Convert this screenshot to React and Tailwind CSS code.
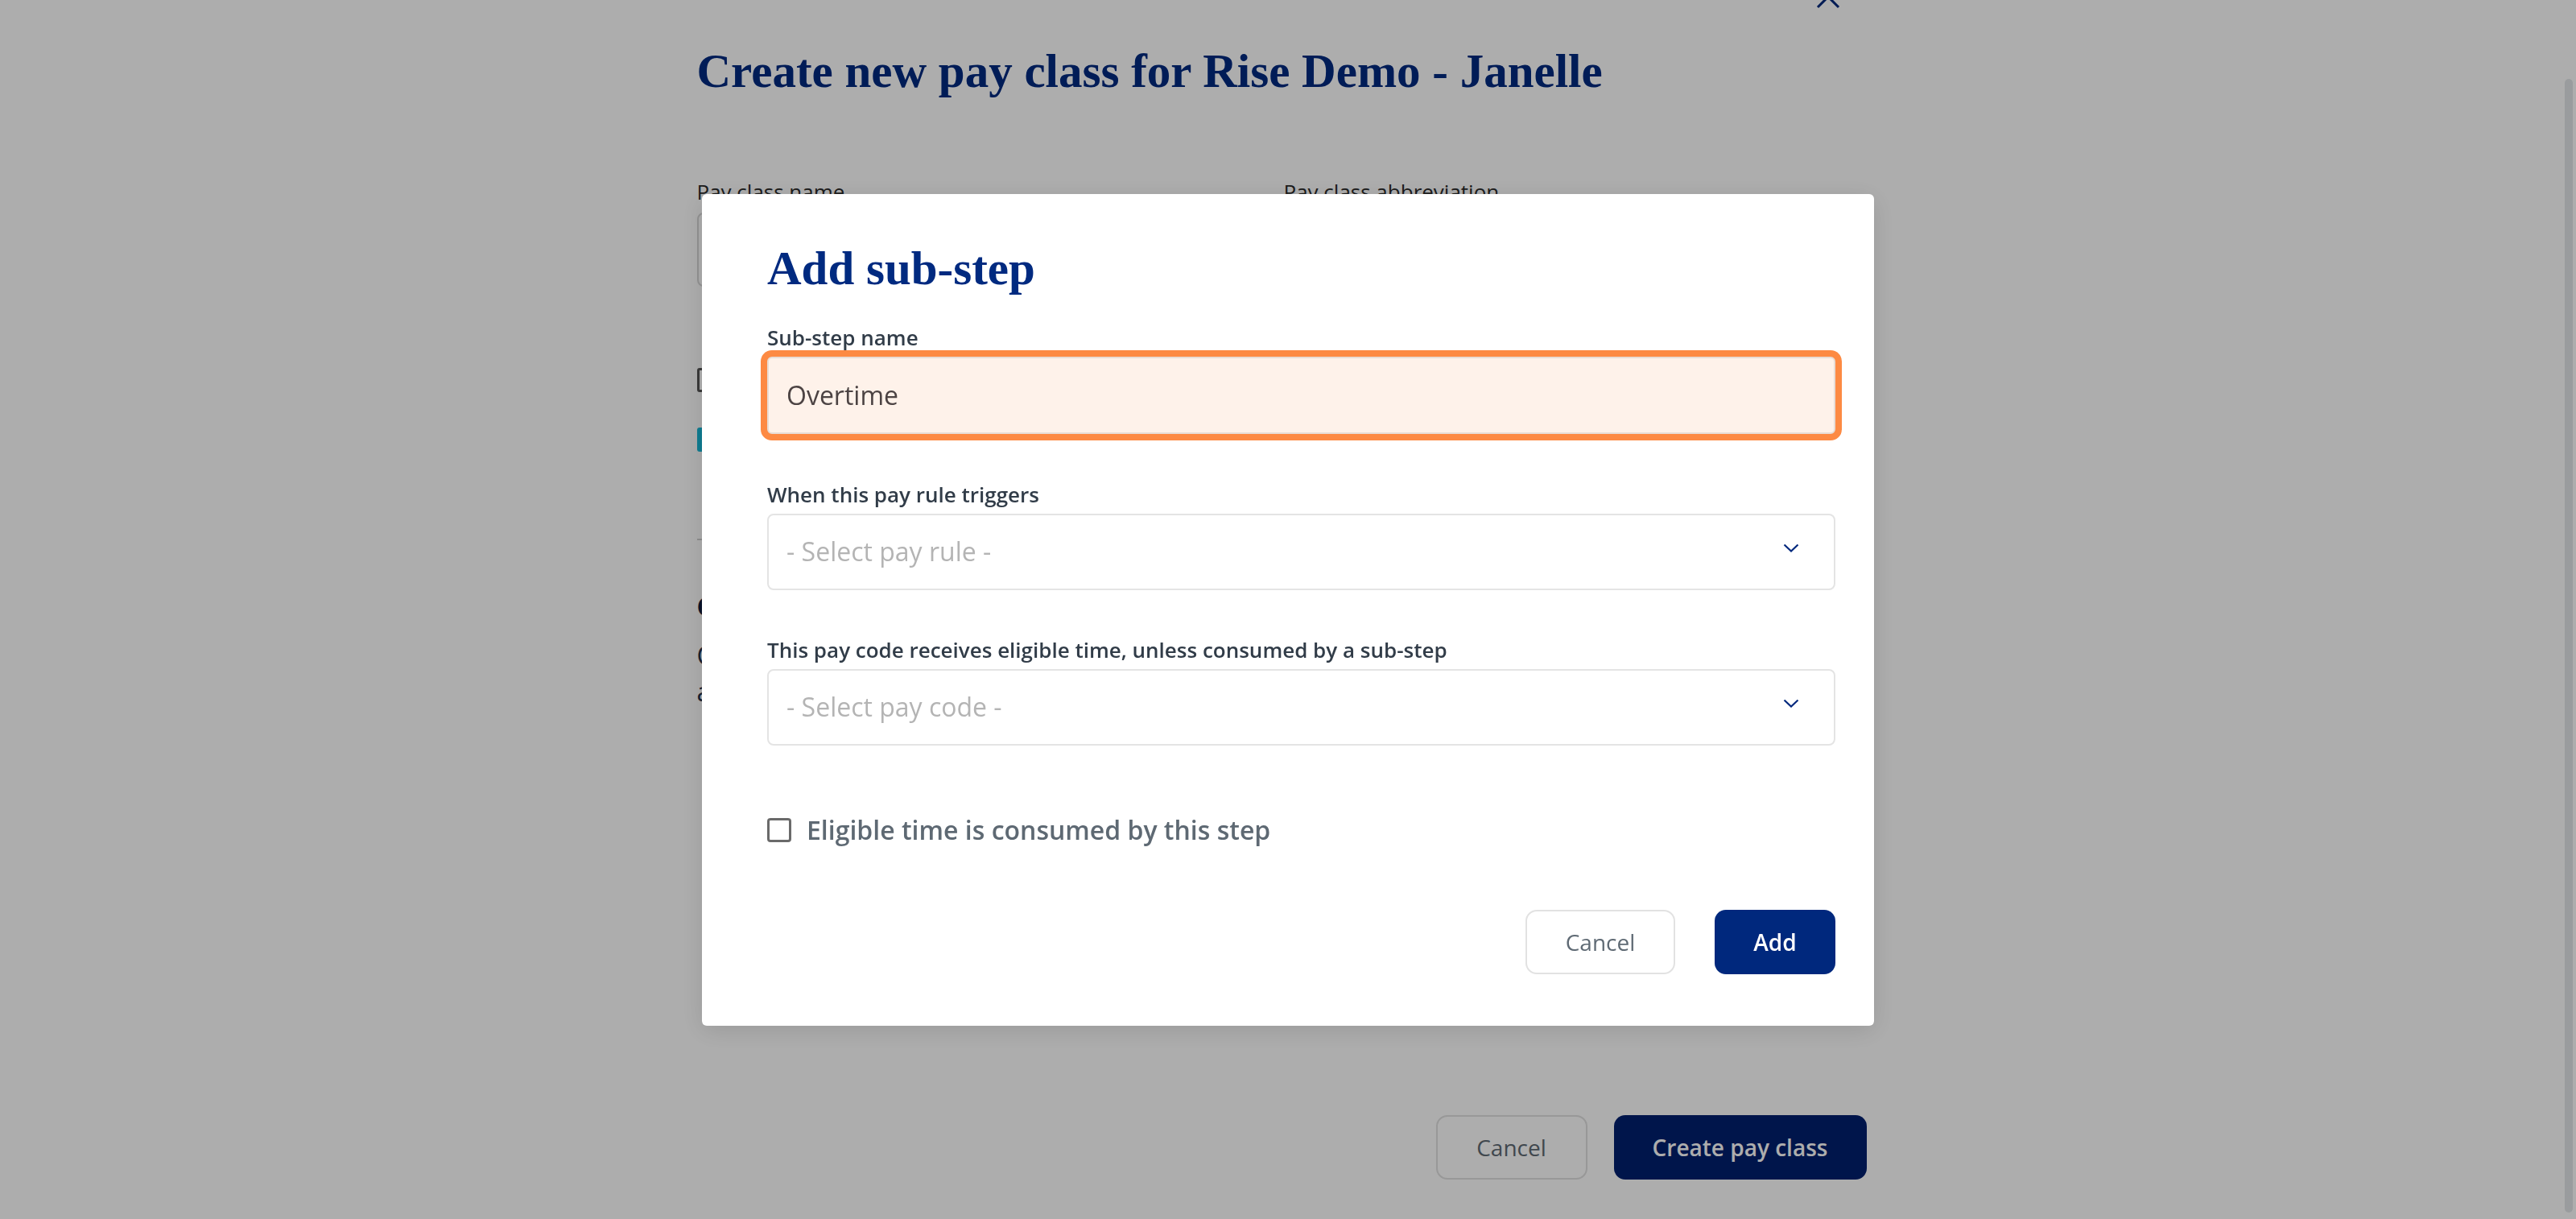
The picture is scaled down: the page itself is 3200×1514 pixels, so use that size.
import React, { useState } from "react";

const SelectField = ({ label, placeholder }) => {
  return (
    <div className="mt-[57px]">
      <label className="block text-[26px] leading-[36px] font-semibold text-[#313c48]">
        {label}
      </label>
      <button
        type="button"
        className="mt-[6px] flex h-[95px] w-full items-center justify-between rounded-[8px] border-2 border-[#e4e4e4] bg-white pl-[22px] pr-[43px] text-left"
      >
        <span className="text-[32px] text-[#b4b4b4]">{placeholder}</span>
        {/* chevron */}
        <svg
          width="20"
          height="11"
          viewBox="0 0 20 11"
          fill="none"
          className="mb-[10px]"
        >
          <path d="M1.5 1.5l8.5 8 8.5-8" stroke="#00287d" strokeWidth="2.2" />
        </svg>
      </button>
    </div>
  );
};

const App = () => {
  const [subStepName, setSubStepName] = useState("Overtime");
  const [consumed, setConsumed] = useState(false);

  return (
    <div className="relative h-[1514px] overflow-hidden bg-white font-['Open_Sans',sans-serif]">
      {/* page behind the modal */}
      <div className="pr-[16px]">
        <div className="relative mx-auto w-[1453px] pt-[59px]">
          <button
            type="button"
            className="absolute right-[32px] top-[-20px]"
            aria-label="Close"
          >
            <svg width="32" height="32" viewBox="0 0 32 32" fill="none">
              <path d="M3 3l26 26M29 3L3 29" stroke="#00287d" strokeWidth="3" />
            </svg>
          </button>

          <h1 className="font-['Liberation_Serif',serif] text-[59px] font-bold leading-none text-[#002a80]">
            Create new pay class for Rise Demo - Janelle
          </h1>

          <div className="mt-[102px] flex gap-[34px]">
            <div className="w-[695px]">
              <label className="block text-[26px] leading-[36px] text-[#2b2b2b]">
                Pay class name
              </label>
              <div className="mt-[8px] h-[92px] rounded-[8px] border-2 border-[#d8d8d8]" />
            </div>
            <div className="flex-1">
              <label className="block text-[26px] leading-[36px] text-[#2b2b2b]">
                Pay class abbreviation
              </label>
              <div className="mt-[8px] h-[92px] rounded-[8px] border-2 border-[#d8d8d8]" />
            </div>
          </div>

          <div className="mt-[101px] flex h-[30px] items-center gap-[18px]">
            <div className="h-[30px] w-[30px] rounded-[3px] border-[3px] border-[#555]" />
            <span className="text-[30px] leading-[30px] text-[#555]">
              Pay class is active
            </span>
          </div>
          <div className="mt-[44px] flex h-[30px] items-center gap-[18px]">
            <div className="h-[30px] w-[30px] rounded-[3px] bg-[#17b7d6]" />
            <span className="text-[30px] leading-[30px] text-[#555]">
              Use sub-steps for this pay class
            </span>
          </div>

          <div className="mt-[108px] h-[2px] bg-[#d0d0d0]" />

          <h2 className="mt-[60px] text-[32px] font-bold leading-[44px] text-[#0d1b3e]">
            Calculation steps
          </h2>
          <p className="mt-[16px] text-[32px] leading-[45px] text-[#22304a]">
            Configure the steps that eligible time passes through for this pay
            class,
            <br />
            and the pay codes that receive it.
          </p>

          <div className="mt-[504px] flex justify-end gap-[33px]">
            <button
              type="button"
              className="h-[80px] w-[188px] rounded-[14px] border-2 border-[#e0e0e0] text-[28px] font-medium text-[#5f6a74]"
            >
              Cancel
            </button>
            <button
              type="button"
              className="h-[80px] w-[314px] rounded-[14px] bg-[#00206f] text-[28px] font-semibold text-white"
            >
              Create pay class
            </button>
          </div>
        </div>
      </div>

      {/* overlay + modal */}
      <div className="fixed inset-0 flex items-center justify-center bg-black/[0.32]">
        <div className="h-[1033px] w-[1456px] rounded-[6px] bg-white pb-[64px] pl-[81px] pr-[48px] pt-[63px] shadow-[0_6px_30px_rgba(0,0,0,0.12)]">
          <h2 className="font-['Liberation_Serif',serif] text-[59px] font-bold leading-none text-[#002a80]">
            Add sub-step
          </h2>

          <div className="mt-[38px]">
            <label
              htmlFor="subStepName"
              className="block text-[26px] leading-[36px] font-semibold text-[#313c48]"
            >
              Sub-step name
            </label>
            <input
              id="subStepName"
              type="text"
              value={subStepName}
              onChange={(e) => setSubStepName(e.target.value)}
              className="mt-[6px] block h-[96px] w-full rounded-[6px] border-2 border-[#e8ddd5] bg-[#fef2ea] px-[22px] text-[32px] text-[#4c4343] outline-none ring-8 ring-[#fd8a43]"
            />
          </div>

          <SelectField
            label="When this pay rule triggers"
            placeholder="- Select pay rule -"
          />

          <div className="-mt-[1px]">
            <SelectField
              label="This pay code receives eligible time, unless consumed by a sub-step"
              placeholder="- Select pay code -"
            />
          </div>

          <label className="mt-[83px] flex h-[44px] cursor-pointer items-center gap-[19px]">
            <span
              onClick={() => setConsumed(!consumed)}
              className="h-[30px] w-[30px] rounded-[4px] border-[3px] border-[#6a6a6a]"
            />
            <span className="text-[32px] font-semibold leading-[44px] text-[#5e6973]">
              Eligible time is consumed by this step
            </span>
          </label>

          <div className="mt-[77px] flex justify-end gap-[49px]">
            <button
              type="button"
              className="h-[80px] w-[186px] rounded-[14px] border-2 border-[#e2e2e2] bg-white text-[28px] font-medium text-[#5f6a74]"
            >
              Cancel
            </button>
            <button
              type="button"
              className="h-[80px] w-[150px] rounded-[14px] bg-[#00287d] text-[28px] font-semibold text-white"
            >
              Add
            </button>
          </div>
        </div>
      </div>

      {/* page scrollbar thumb */}
      <div className="fixed right-[4px] top-[98px] bottom-[8px] w-[10px] rounded-full bg-[#9a9c9e]" />
    </div>
  );
};

export default App;
